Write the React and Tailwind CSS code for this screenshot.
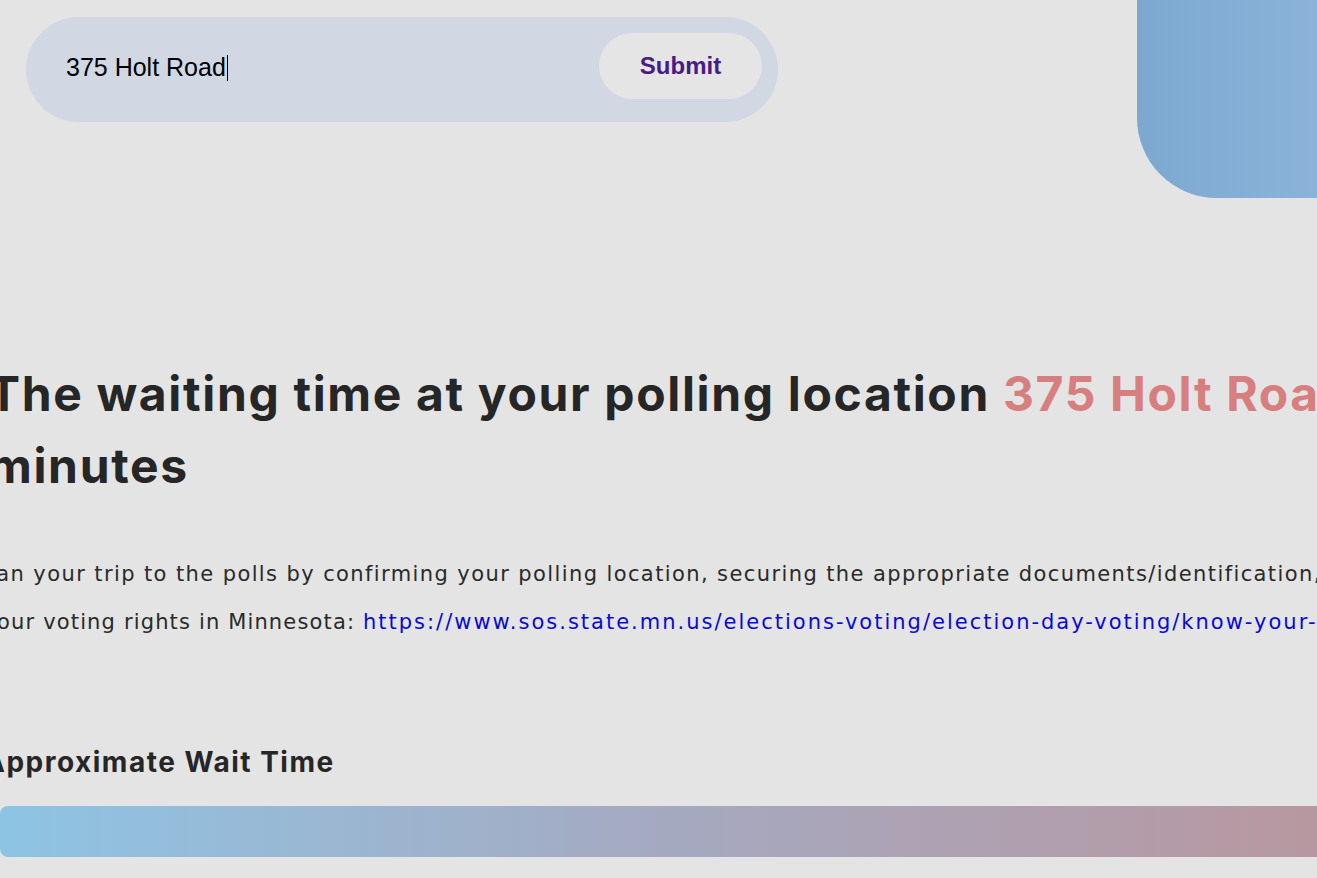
import React from 'react'

const inter = { fontFamily: 'Inter, "Noto Sans", sans-serif' }
const dejavu = { fontFamily: '"DejaVu Sans", "Noto Sans", sans-serif' }
const arial = { fontFamily: '"Liberation Sans", Arial, sans-serif' }

export default function App() {
  return (
    <div className="relative min-h-screen w-full overflow-hidden bg-[#e4e4e4] text-[#262626]" style={inter}>
      {/* decorative corner */}
      <div className="absolute right-0 top-0 h-[198px] w-[180px] rounded-bl-[80px] bg-gradient-to-r from-[#7ca8d0] to-[#8bb3d9]" />

      {/* Address search */}
      <div className="pl-[26px] pt-[17px]">
        <div className="flex h-[105px] w-[752px] items-start justify-between rounded-full bg-[#d1d7e3] pl-[40px] pr-[16px] pt-[16px]" style={arial}>
          <div className="flex h-[66px] items-center pt-[4px] text-[25px] text-black">
            375 Holt Road
            <span className="ml-px inline-block h-[26px] w-px bg-black" />
          </div>
          <button className="h-[66px] w-[163px] rounded-full bg-[#e5e5e6] text-[24px] font-bold text-[#4a1b80]">
            Submit
          </button>
        </div>
      </div>

      {/* Result */}
      <div className="mt-[236px] whitespace-nowrap">
        <h1 className="-ml-[12px] text-[48px] font-bold leading-[72px] tracking-[1.65px]">
          The waiting time at your polling location <span className="text-[#d77e7e]">375 Holt Road</span> is
          <br />
          minutes
        </h1>

        <div className="mt-[48px] text-[21px] leading-[48px] tracking-[1.15px] text-[#2a2a2a]" style={dejavu}>
          <p className="-ml-[25px] tracking-[1.4px]">
            Plan your trip to the polls by confirming your polling location, securing the appropriate documents/identification, and
          </p>
          <p className="-ml-[86px]">
            Know your voting rights in Minnesota:{' '}
            <a className="tracking-[2px] text-[#0a0ad6]" href="#">https://www.sos.state.mn.us/elections-voting/election-day-voting/know-your-rights/</a>
          </p>
        </div>

        <h2 className="-ml-[16px] mt-[96px] text-[28px] font-bold leading-[40px] tracking-[1.5px]">Approximate Wait Time</h2>

        <div className="mt-[24px] h-[51px] w-[1340px] rounded-[8px] bg-gradient-to-r from-[#8dc4e4] via-[#a5a9c0] to-[#b8979f]" />
      </div>
    </div>
  )
}
